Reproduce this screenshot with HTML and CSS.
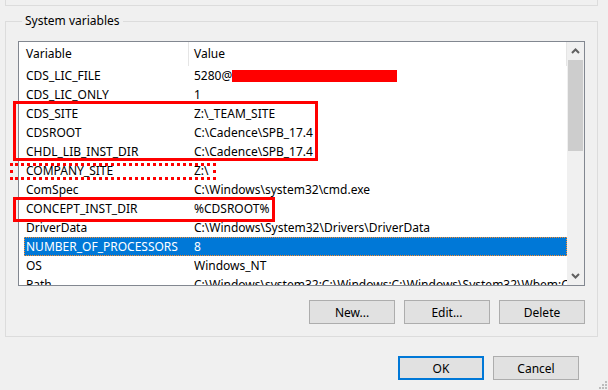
FILE: index.html
```html
<!DOCTYPE html>
<html lang="en">
<head>
  <meta charset="UTF-8">
  <title>Environment Variables</title>
  <link rel="stylesheet" href="styles.css">
</head>
<body>
  <div class="dialog">
    <!-- bottom edge of the user variables group, scrolled off above -->
    <div class="top-group"></div>

    <fieldset class="group">
      <legend>System variables</legend>

      <div class="listview">
        <div class="list-body">
          <div class="list-header">
            <div class="col-head first">Variable</div>
            <div class="col-head">Value</div>
          </div>
          <div class="row"><span>CDS_LIC_FILE</span><span>5280@<span class="redact"></span></span></div>
          <div class="row"><span>CDS_LIC_ONLY</span><span>1</span></div>
          <div class="row"><span>CDS_SITE</span><span>Z:\_TEAM_SITE</span></div>
          <div class="row"><span>CDSROOT</span><span>C:\Cadence\SPB_17.4</span></div>
          <div class="row"><span>CHDL_LIB_INST_DIR</span><span>C:\Cadence\SPB_17.4</span></div>
          <div class="row"><span>COMPANY_SITE</span><span>Z:\</span></div>
          <div class="row"><span>ComSpec</span><span>C:\Windows\system32\cmd.exe</span></div>
          <div class="row"><span>CONCEPT_INST_DIR</span><span>%CDSROOT%</span></div>
          <div class="row"><span>DriverData</span><span>C:\Windows\System32\Drivers\DriverData</span></div>
          <div class="row selected"><span>NUMBER_OF_PROCESSORS</span><span>8</span></div>
          <div class="row"><span>OS</span><span>Windows_NT</span></div>
          <div class="row"><span>Path</span><span>C:\Windows\system32;C:\Windows;C:\Windows\System32\Wbem;C:\Windows\</span></div>
        </div>

        <div class="scrollbar">
          <div class="arrow">
            <svg width="9" height="6" viewBox="0 0 9 6"><path d="M1 5 L4.5 1.5 L8 5" fill="none" stroke="#606060" stroke-width="2"/></svg>
          </div>
          <div class="thumb"></div>
          <div class="track"></div>
          <div class="arrow">
            <svg width="9" height="6" viewBox="0 0 9 6"><path d="M1 1 L4.5 4.5 L8 1" fill="none" stroke="#606060" stroke-width="2"/></svg>
          </div>
        </div>

        <!-- annotations drawn over the list -->
        <div class="mark mark-site"></div>
        <div class="mark mark-company"></div>
        <div class="mark mark-concept"></div>
      </div>

      <div class="buttons">
        <button>New...</button>
        <button>Edit...</button>
        <button>Delete</button>
      </div>
    </fieldset>

    <div class="footer">
      <button class="default">OK</button>
      <button>Cancel</button>
    </div>

    <svg class="grip" width="11" height="11" viewBox="0 0 11 11">
      <rect x="8" y="2" width="2" height="2" fill="#bcbcbc"/>
      <rect x="5" y="5" width="2" height="2" fill="#bcbcbc"/>
      <rect x="8" y="5" width="2" height="2" fill="#bcbcbc"/>
      <rect x="2" y="8" width="2" height="2" fill="#bcbcbc"/>
      <rect x="5" y="8" width="2" height="2" fill="#bcbcbc"/>
      <rect x="8" y="8" width="2" height="2" fill="#bcbcbc"/>
    </svg>
  </div>
</body>
</html>
```

FILE: styles.css
```css
body {
  margin: 0;
  background: #f0f0f0;
  font-family: 'Noto Sans', 'Segoe UI', sans-serif;
  font-size: 12px;
  color: #000;
}
.dialog {
  position: relative;
  width: 608px;
  height: 390px;
  overflow: hidden;
}
.top-group {
  height: 5px;
  margin: 0 10px 0 5px;
  border: 1px solid #dcdcdc;
  border-top: none;
}
.group {
  margin: 7px 10px 0 5px;
  padding: 12px 12px 12px 12px;
  border: 1px solid #dcdcdc;
  min-width: 0;
}
.group legend {
  padding: 0 3px;
  margin-left: 4px;
  line-height: 16px;
}
.listview {
  position: relative;
  display: flex;
  height: 243px;
  border: 1px solid #828790;
  background: #fff;
}
.list-body {
  flex: 1;
  overflow: hidden;
  white-space: nowrap;
}
.list-header {
  display: grid;
  grid-template-columns: 170px 1fr;
  height: 24px;
  line-height: 24px;
}
.col-head {
  padding-left: 5px;
  border-right: 1px solid #e5e5e5;
}
.col-head.first {
  padding-left: 7px;
}
.row {
  display: grid;
  grid-template-columns: 168px 1fr;
  height: 19px;
  line-height: 19px;
  margin-left: 5px;
  padding-left: 2px;
  box-sizing: border-box;
}
.row span {
  overflow: hidden;
}
.row.selected {
  background: #0078d7;
  color: #fff;
  outline: 1px dotted #ff8c28;
  outline-offset: -1px;
}
.redact {
  display: inline-block;
  width: 165px;
  height: 12px;
  background: #ff0000;
  vertical-align: -2px;
}
.scrollbar {
  width: 17px;
  display: flex;
  flex-direction: column;
  background: #f0f0f0;
}
.arrow {
  height: 18px;
  display: flex;
  align-items: center;
  justify-content: center;
}
.thumb {
  height: 91px;
  margin: 0 1px;
  background: #cdcdcd;
}
.track {
  flex: 1;
}
.mark {
  position: absolute;
  box-sizing: border-box;
  border: 3px solid #ff0000;
}
.mark-site {
  left: -6px;
  top: 59px;
  width: 305px;
  height: 60px;
}
.mark-company {
  left: -9px;
  top: 121px;
  width: 206px;
  height: 17px;
  border-style: dotted;
}
.mark-concept {
  left: -6px;
  top: 155px;
  width: 262px;
  height: 25px;
}
.buttons,
.footer {
  display: flex;
  justify-content: flex-end;
  gap: 9px;
}
.buttons {
  margin-top: 14px;
}
.footer {
  margin: 19px 29px 0 0;
}
button {
  width: 86px;
  height: 24px;
  padding: 0;
  font-family: inherit;
  font-size: 12px;
  color: #000;
  background: #e1e1e1;
  border: 1px solid #adadad;
  border-radius: 0;
}
button.default {
  border: 2px solid #0078d7;
}
.grip {
  position: absolute;
  right: 0;
  bottom: 0;
}
```
